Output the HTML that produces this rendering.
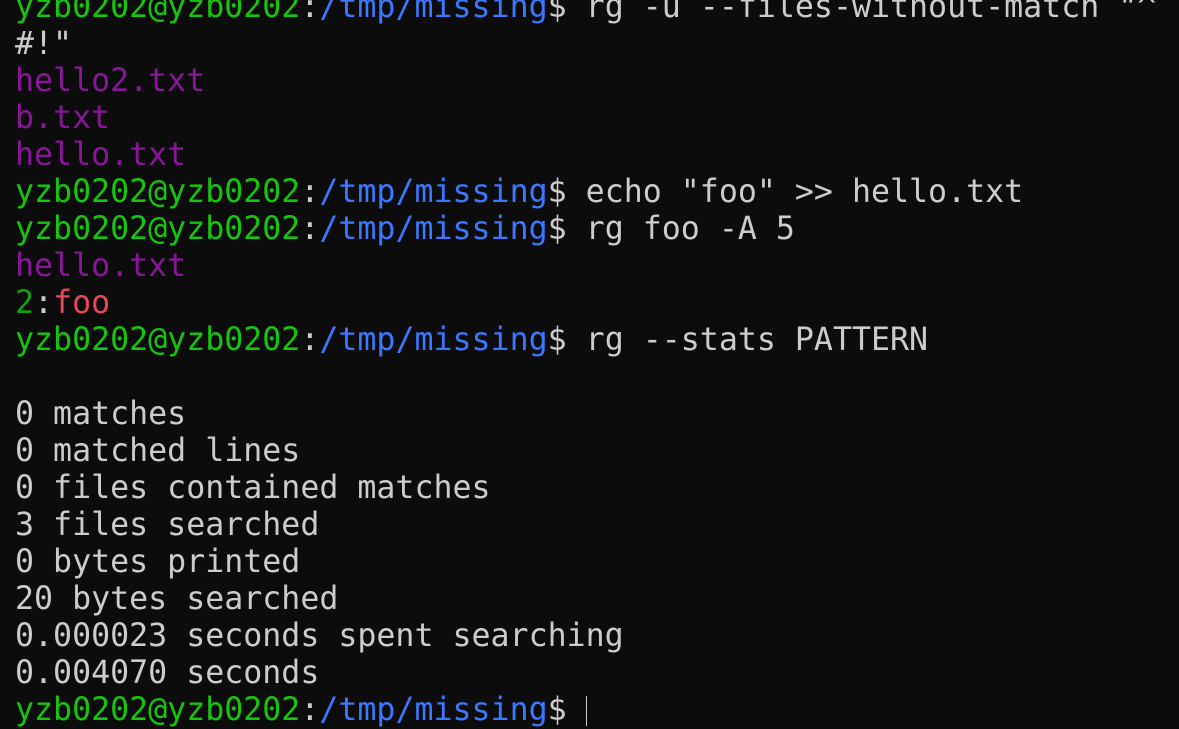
<!DOCTYPE html>
<html><head><meta charset="utf-8"><style>
html,body{margin:0;padding:0;background:#0c0c0c;width:1179px;height:704px;overflow:hidden}
pre{position:absolute;left:15px;top:-11px;margin:0;font-family:"DejaVu Sans Mono","Liberation Mono",monospace;font-size:31.6px;line-height:37px;color:#cccccc;white-space:pre}
.g{color:#16c60c}.b{color:#3b78ff}.p{color:#881798}.r{color:#e74856}.d{color:#13a10e}
.c{display:inline-block;width:1px;height:30px;background:#ccc;vertical-align:-6px}
</style></head><body>
<pre><span class="g">yzb0202@yzb0202</span>:<span class="b">/tmp/missing</span>$ rg -u --files-without-match "^
#!"
<span class="p">hello2.txt</span>
<span class="p">b.txt</span>
<span class="p">hello.txt</span>
<span class="g">yzb0202@yzb0202</span>:<span class="b">/tmp/missing</span>$ echo "foo" &gt;&gt; hello.txt
<span class="g">yzb0202@yzb0202</span>:<span class="b">/tmp/missing</span>$ rg foo -A 5
<span class="p">hello.txt</span>
<span class="d">2</span>:<span class="r">foo</span>
<span class="g">yzb0202@yzb0202</span>:<span class="b">/tmp/missing</span>$ rg --stats PATTERN

0 matches
0 matched lines
0 files contained matches
3 files searched
0 bytes printed
20 bytes searched
0.000023 seconds spent searching
0.004070 seconds
<span class="g">yzb0202@yzb0202</span>:<span class="b">/tmp/missing</span>$ <span class="c"></span></pre>
</body></html>
